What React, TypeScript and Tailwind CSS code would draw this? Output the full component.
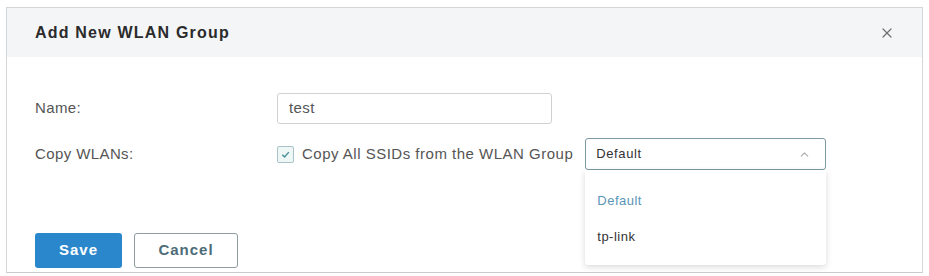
import { ChevronUp, X } from "lucide-react"

export default function App() {
  return (
    <div className="w-[929px] h-[276px] bg-white pt-[7px] pl-[6px] pr-[6px] font-['Liberation_Sans',Arial,sans-serif]">
      <div className="relative h-[266px] border border-[#d4d7da] border-b-[#c9cbcd]">
        <div className="flex h-[49px] items-center justify-between bg-[#f3f5f7] pl-[28px] pr-[27px]">
          <h2 className="text-[16px] font-bold tracking-[1.2px] text-[#2b2b2b]">Add New WLAN Group</h2>
          <X className="h-[16px] w-[16px] text-[#707070]" strokeWidth={1.8} />
        </div>
        <div className="pl-[28px] pt-[36px]">
          <div className="flex items-center">
            <span className="w-[242px] text-[15px] tracking-[0.4px] text-[#555]">Name:</span>
            <div className="flex h-[31px] w-[275px] items-center rounded-[3px] border border-[#cfd3d6] px-[11px] text-[15px] tracking-[0.4px] text-[#555]">
              test
            </div>
          </div>
          <div className="mt-[14px] flex items-center">
            <span className="w-[242px] text-[15px] tracking-[0.4px] text-[#555]">Copy WLANs:</span>
            <span className="flex h-[17px] w-[17px] items-center justify-center rounded-[2px] border border-[#a9c3c9] bg-[#eef6f6]">
              <svg viewBox="0 0 12 12" className="h-[11px] w-[11px]">
                <path d="M2.5 6.3 L5 8.6 L9.6 3.4" fill="none" stroke="#4a8f9a" strokeWidth="1.6" />
              </svg>
            </span>
            <span className="ml-[8px] text-[15px] tracking-[0.5px] text-[#555]">Copy All SSIDs from the WLAN Group</span>
            <div className="relative ml-[12px]">
              <div className="flex h-[32px] w-[241px] items-center justify-between rounded-[3px] border border-[#7d9aa4] px-[10px] text-[13px] tracking-[0.6px] text-[#333]">
                <span>Default</span>
                <ChevronUp className="mr-[4px] h-[13px] w-[13px] text-[#aaa]" strokeWidth={2} />
              </div>
              <div className="absolute left-0 top-[32px] z-10 flex h-[95px] w-[241px] flex-col rounded-b-[3px] bg-white pl-[12px] pt-[21px] text-[13px] tracking-[0.5px] shadow-[0_2px_6px_rgba(0,0,0,0.15)]">
                <span className="text-[#5b95b8]">Default</span>
                <span className="mt-[16px] text-[#333]">tp-link</span>
              </div>
            </div>
          </div>
          <div className="mt-[63px] flex gap-[12px]">
            <button className="h-[35px] w-[87px] rounded-[3px] bg-[#2b87cc] text-[15px] font-bold tracking-[1px] text-white">
              Save
            </button>
            <button className="h-[35px] w-[104px] rounded-[3px] border border-[#8e9ba0] bg-white text-[15px] font-bold tracking-[1px] text-[#4d6c78]">
              Cancel
            </button>
          </div>
        </div>
      </div>
    </div>
  )
}
